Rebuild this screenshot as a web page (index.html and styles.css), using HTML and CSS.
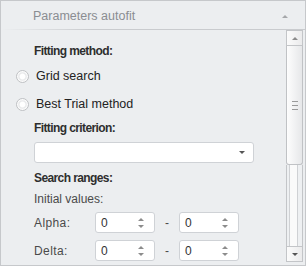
FILE: index.html
```html
<!DOCTYPE html>
<html lang="en">
<head>
    <meta charset="UTF-8">
    <title>Parameters autofit</title>
    <link rel="stylesheet" href="styles.css">
</head>
<body>
    <div class="panel">
        <div class="head">
            <span>Parameters autofit</span>
            <i class="tri up"></i>
        </div>
        <div class="main">
            <div class="content">
                <div class="title first">Fitting method:</div>
                <div class="radio r1"><span class="dot"></span>Grid search</div>
                <div class="radio r2"><span class="dot"></span>Best Trial method</div>
                <div class="title t2">Fitting criterion:</div>
                <div class="select"><i class="tri down"></i></div>
                <div class="title t3">Search ranges:</div>
                <div class="sub">Initial values:</div>
                <div class="row r-alpha">
                    <span class="lbl">Alpha:</span>
                    <div class="spin">0<span class="arr"><i class="tri up"></i><i class="tri down"></i></span></div>
                    <span class="dash">-</span>
                    <div class="spin">0<span class="arr"><i class="tri up"></i><i class="tri down"></i></span></div>
                </div>
                <div class="row r-delta">
                    <span class="lbl">Delta:</span>
                    <div class="spin">0<span class="arr"><i class="tri up"></i><i class="tri down"></i></span></div>
                    <span class="dash">-</span>
                    <div class="spin">0<span class="arr"><i class="tri up"></i><i class="tri down"></i></span></div>
                </div>
            </div>
            <div class="scroll">
                <div class="btn"><i class="tri up"></i></div>
                <div class="thumb"><span class="grip"></span></div>
                <div class="track"></div>
                <div class="btn"><i class="tri down"></i></div>
            </div>
        </div>
    </div>
</body>
</html>
```

FILE: styles.css
```css
*{
    margin: 0;
    padding: 0;
    box-sizing: border-box;
}
body{
    font-family: "Liberation Sans", Arial, sans-serif;
    font-size: 12px;
    color: #333;
    background: #fff;
}
.panel{
    width: 306px;
    height: 266px;
    border: 1px solid #c6c8cb;
    background: #eceef0;
    display: flex;
    flex-direction: column;
}
.head{
    height: 29px;
    flex: none;
    display: flex;
    align-items: center;
    justify-content: space-between;
    padding: 0 17px 0 32px;
    color: #8a8d92;
    font-size: 12.5px;
    background-image: linear-gradient(to right, #eceef0, #c9cbce 30%, #c9cbce);
    background-size: 100% 1px;
    background-position: bottom;
    background-repeat: no-repeat;
}
.tri{
    display: block;
    width: 0;
    height: 0;
    border-left: 3px solid transparent;
    border-right: 3px solid transparent;
}
.tri.up{
    border-bottom: 3px solid #8c8c8c;
}
.tri.down{
    border-top: 3px solid #555;
}
.head .tri.up{
    border-bottom-color: #a5a7aa;
    margin-top: 2px;
}
.main{
    flex: 1;
    display: flex;
    min-height: 0;
}
.content{
    flex: 1;
    padding-left: 33px;
}
.title{
    font-weight: bold;
    font-size: 12px;
    letter-spacing: -0.6px;
    height: 16px;
    line-height: 16px;
    color: #2e2e2e;
}
.first{ margin-top: 13px; }
.t2{ margin-top: 6px; }
.t3{ margin-top: 7px; }
.radio{
    height: 20px;
    display: flex;
    align-items: center;
    margin-left: -18px;
    color: #222;
    font-size: 12.5px;
}
.r1{ margin-top: 7px; }
.r2{ margin-top: 8px; }
.dot{
    width: 13px;
    height: 13px;
    border-radius: 50%;
    border: 1px solid #bfc1c4;
    background: radial-gradient(circle, #fff 0, #fff 2.5px, #e6e7e9 3.5px, #fbfbfb 5px);
    margin-right: 7px;
}
.select{
    margin-top: 6px;
    width: 220px;
    height: 21px;
    background: #fff;
    border: 1px solid #cfd2d6;
    border-radius: 3px;
    display: flex;
    align-items: center;
    justify-content: flex-end;
    padding-right: 8px;
}
.sub{
    margin-top: 5px;
    height: 16px;
    line-height: 16px;
    color: #4a4a4a;
}
.row{
    display: flex;
    align-items: center;
    height: 21px;
    color: #4a4a4a;
}
.r-alpha{ margin-top: 5px; }
.r-delta{ margin-top: 7px; }
.lbl{
    width: 61px;
    letter-spacing: 0.4px;
}
.spin{
    width: 60px;
    height: 21px;
    background: #fff;
    border: 1px solid #cfd2d6;
    border-radius: 3px;
    display: flex;
    align-items: center;
    justify-content: space-between;
    padding: 0 10px 0 5px;
    color: #333;
}
.spin .arr{
    display: flex;
    flex-direction: column;
    gap: 4px;
}
.spin .tri.up{ border-bottom-color: #8c8c8c; }
.spin .tri.down{ border-top-color: #8c8c8c; }
.dash{
    width: 24px;
    text-align: center;
}
.scroll{
    width: 17px;
    margin-right: 2px;
    display: flex;
    flex-direction: column;
    padding-bottom: 3px;
}
.btn{
    height: 16px;
    flex: none;
    border: 1px solid #c3c5c8;
    background: linear-gradient(to right, #fbfbfb, #ebebec);
    display: flex;
    align-items: center;
    justify-content: center;
}
.thumb{
    height: 119px;
    flex: none;
    border: 1px solid #c0c2c5;
    border-top: none;
    border-radius: 0 0 3px 3px;
    background: linear-gradient(to right, #fdfdfd, #e6e7e9);
    display: flex;
    align-items: center;
    justify-content: center;
}
.grip{
    width: 6px;
    height: 9px;
    background: repeating-linear-gradient(to bottom, #9a9a9a 0, #9a9a9a 1px, transparent 1px, transparent 4px);
}
.track{
    flex: 1;
    border-left: 1px solid #c3c5c8;
    border-right: 1px solid #c3c5c8;
    background: linear-gradient(to right, #eef0f2 0, #eef0f2 2px, #cfd1d4 2px, #cfd1d4 3px, #fafafa 3px, #fafafa 10px, #cfd1d4 10px, #cfd1d4 11px, #eef0f2 11px);
}
```
